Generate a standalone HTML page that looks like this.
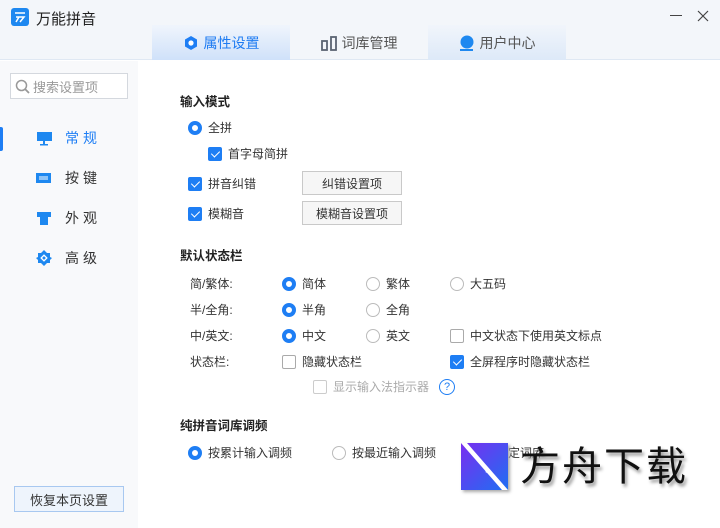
<!DOCTYPE html>
<html><head><meta charset="utf-8"><style>
*{margin:0;padding:0;box-sizing:border-box}
body{width:720px;height:528px;overflow:hidden;background:#fff;font-family:"Liberation Sans","Noto Sans CJK SC",sans-serif;font-size:12px;color:#333;position:relative}
.a{position:absolute}
.hdr{left:0;top:0;width:720px;height:60px;background:#f3f6fa;border-bottom:1px solid #dfe8f3}
.side{left:0;top:61px;width:138px;height:467px;background:#f8f9fb}
.tab{top:25px;height:35px;width:138px;font-size:14px;display:flex;align-items:center;justify-content:center;gap:5px;color:#555}
.t1{left:152px;background:linear-gradient(#f0f5fc,#cfe1fa);color:#1f7cf2}
.t3{left:428px;background:linear-gradient(#f1f5fb,#dde9f8)}
.nav{left:36px;font-size:14px;letter-spacing:4px;display:flex;align-items:center;gap:13px;color:#333}
.h{font-weight:bold;font-size:12.5px;color:#222;left:180px}
.r{width:14px;height:14px;border-radius:50%;border:1px solid #bbb;display:inline-block}
.r.on{border:4px solid #1e7ef4}
.c{width:14px;height:14px;border:1px solid #aaa;border-radius:2px;display:inline-block;position:relative}
.c.on{background:#1e7ef4;border-color:#1e7ef4}
.c.on:after{content:"";position:absolute;left:4px;top:1px;width:4px;height:7px;border:solid #fff;border-width:0 1.5px 1.5px 0;transform:rotate(45deg)}
.row{display:flex;align-items:center;gap:6px;font-size:12px}
.btn{border:1px solid #c9c9c9;background:#f6f6f6;font-size:12px;display:flex;align-items:center;justify-content:center;color:#333}
</style></head><body>
<div class="a hdr"></div>
<div class="a" style="left:11px;top:8px;width:18px;height:18px;background:#1e88f0;border-radius:3px"><svg width="18" height="18"><path d="M4 5h10M5 9h8l-4 5M8 9l-3 5" stroke="#fff" stroke-width="1.5" fill="none"/></svg></div>
<div class="a" style="left:36px;top:8px;font-size:15px;color:#222">万能拼音</div>
<div class="a" style="left:670px;top:15px;width:12px;height:1px;background:#444"></div>
<svg class="a" style="left:697px;top:10px" width="12" height="12"><path d="M1 1L11 11M11 1L1 11" stroke="#444" stroke-width="1.2"/></svg>
<div class="a tab t1"><svg width="16" height="16"><path d="M8 1l6 3.5v7L8 15l-6-3.5v-7z" fill="#1e7ef4"/><circle cx="8" cy="8" r="2.6" fill="#fff"/></svg>属性设置</div>
<div class="a tab" style="left:290px"><svg width="16" height="16"><rect x="1" y="6" width="5" height="9" fill="none" stroke="#5a6472" stroke-width="1.8"/><rect x="10" y="2" width="5" height="13" fill="none" stroke="#5a6472" stroke-width="1.8"/></svg>词库管理</div>
<div class="a tab t3"><svg width="16" height="16"><circle cx="8" cy="7" r="6.5" fill="#1e88f0"/><rect x="1" y="14" width="13" height="2" fill="#1e88f0"/></svg>用户中心</div>
<div class="a side"></div>
<div class="a" style="left:10px;top:73px;width:118px;height:26px;border:1px solid #d4d8de;background:#fff;display:flex;align-items:center;padding-left:4px;gap:3px;color:#999;font-size:13px"><svg width="15" height="15"><circle cx="6.5" cy="6.5" r="5" stroke="#999" stroke-width="1.5" fill="none"/><path d="M10 10l4 4" stroke="#999" stroke-width="1.8"/></svg>搜索设置项</div>
<div class="a" style="left:0;top:127px;width:3px;height:24px;background:#1e7ef4;border-radius:0 2px 2px 0"></div>
<div class="a nav" style="top:128px;color:#1e7ef4"><svg width="16" height="16"><rect x="1" y="2" width="15" height="9" fill="#1e88f0"/><rect x="7" y="11" width="2" height="3" fill="#1e88f0"/><rect x="4" y="14" width="8" height="1.5" fill="#1e88f0"/></svg>常规</div>
<div class="a nav" style="top:168px"><svg width="16" height="16"><rect x="0" y="3" width="15" height="10" fill="#1e88f0"/><path d="M3 7h9M3 9h9" stroke="#fff"/></svg>按键</div>
<div class="a nav" style="top:208px"><svg width="16" height="16"><path d="M1 2h14v5h-3v8H4V7H1z" fill="#1e88f0"/></svg>外观</div>
<div class="a nav" style="top:248px"><svg width="16" height="16"><path d="M8 0l3 3h3v4l2 1-2 2v3h-3l-3 3-3-3H2v-3L0 8l2-1V3h3z" fill="#1e88f0"/><rect x="6" y="6" width="4" height="4" transform="rotate(45 8 8)" fill="none" stroke="#fff" stroke-width="1.3"/></svg>高级</div>
<div class="a btn" style="left:14px;top:486px;width:110px;height:26px;border-color:#a8c8f0;background:#eef4fc;font-size:13px">恢复本页设置</div>

<div class="a h" style="top:91px">输入模式</div>
<div class="a row" style="left:188px;top:119px"><span class="r on"></span>全拼</div>
<div class="a row" style="left:208px;top:145px"><span class="c on"></span>首字母简拼</div>
<div class="a row" style="left:188px;top:175px"><span class="c on"></span>拼音纠错</div>
<div class="a btn" style="left:302px;top:171px;width:100px;height:24px">纠错设置项</div>
<div class="a row" style="left:188px;top:205px"><span class="c on"></span>模糊音</div>
<div class="a btn" style="left:302px;top:201px;width:100px;height:24px">模糊音设置项</div>

<div class="a h" style="top:245px">默认状态栏</div>
<div class="a row" style="left:190px;top:275px">简/繁体:</div>
<div class="a row" style="left:282px;top:275px"><span class="r on"></span>简体</div>
<div class="a row" style="left:366px;top:275px"><span class="r"></span>繁体</div>
<div class="a row" style="left:450px;top:275px"><span class="r"></span>大五码</div>
<div class="a row" style="left:190px;top:301px">半/全角:</div>
<div class="a row" style="left:282px;top:301px"><span class="r on"></span>半角</div>
<div class="a row" style="left:366px;top:301px"><span class="r"></span>全角</div>
<div class="a row" style="left:190px;top:327px">中/英文:</div>
<div class="a row" style="left:282px;top:327px"><span class="r on"></span>中文</div>
<div class="a row" style="left:366px;top:327px"><span class="r"></span>英文</div>
<div class="a row" style="left:450px;top:327px"><span class="c"></span>中文状态下使用英文标点</div>
<div class="a row" style="left:190px;top:353px">状态栏:</div>
<div class="a row" style="left:282px;top:353px"><span class="c"></span>隐藏状态栏</div>
<div class="a row" style="left:450px;top:353px"><span class="c on"></span>全屏程序时隐藏状态栏</div>
<div class="a row" style="left:313px;top:378px;color:#aaa"><span class="c" style="border-color:#ccc"></span>显示输入法指示器 <span style="width:16px;height:16px;border:1.5px solid #1e7ef4;border-radius:50%;color:#1e7ef4;font-size:11px;display:inline-flex;align-items:center;justify-content:center;margin-left:4px">?</span></div>

<div class="a h" style="top:415px">纯拼音词库调频</div>
<div class="a row" style="left:188px;top:444px"><span class="r on"></span>按累计输入调频</div>
<div class="a row" style="left:332px;top:444px"><span class="r"></span>按最近输入调频</div>
<div class="a row" style="left:508px;top:444px">定词库</div>
<div class="a" style="left:461px;top:443px;width:47px;height:47px;background:linear-gradient(135deg,#7a2df0,#1e6ff2);box-shadow:2px 2px 3px #aaa;overflow:hidden"><svg width="47" height="47"><path d="M0 0h6l41 47h-6z" fill="#fff"/><path d="M23 22l5 5-3 3z" fill="#fff"/></svg></div>
<div class="a" style="left:520px;top:443px;font-size:40px;line-height:48px;color:#111;letter-spacing:2px;text-shadow:2px 3px 3px #999">方舟下载</div>
</body></html>
